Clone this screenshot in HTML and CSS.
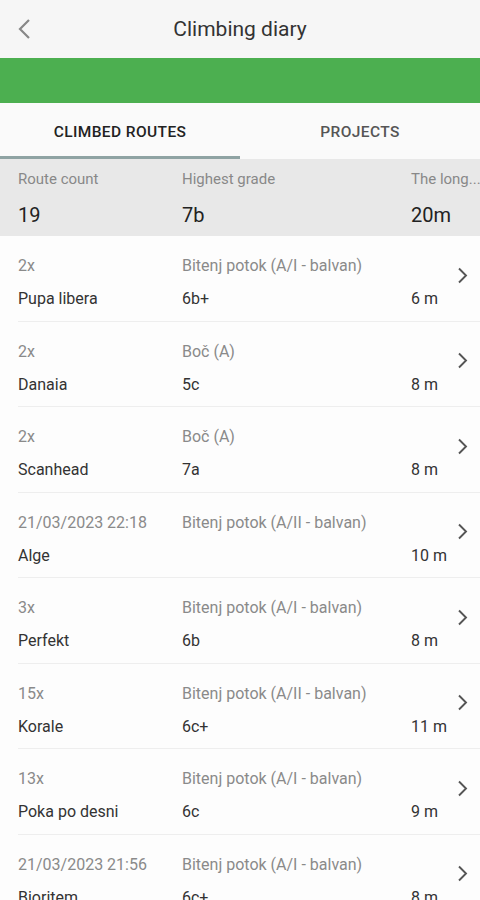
FILE: index.html
```html
<!DOCTYPE html>
<html>
<head>
    <meta charset="UTF-8">
    <title>Climbing diary</title>
    <link rel="stylesheet" href="styles.css">
</head>
<body>
    <div class="top">
        <span class="back">
            <svg width="14" height="22" viewBox="0 0 14 22"><path d="M12 2 L3 11 L12 20" fill="none" stroke="#888" stroke-width="2.2"/></svg>
        </span>
        <div class="title">Climbing diary</div>
    </div>
    <div class="green"></div>
    <div class="tabs">
        <div class="tab active">CLIMBED ROUTES</div>
        <div class="tab">PROJECTS</div>
    </div>
    <div class="stats">
        <div class="stat">
            <div class="lbl">Route count</div>
            <div class="val">19</div>
        </div>
        <div class="stat">
            <div class="lbl">Highest grade</div>
            <div class="val">7b</div>
        </div>
        <div class="stat last">
            <div class="lbl">The long...</div>
            <div class="val">20m</div>
        </div>
    </div>
    <ul class="list">
        <li class="row">
            <div class="cells">
                <span class="c1 sub">2x</span><span class="c2 sub">Bitenj potok (A/I - balvan)</span><span class="c3"></span>
                <span class="c1">Pupa libera</span><span class="c2">6b+</span><span class="c3">6 m</span>
            </div>
            <span class="arr"><svg width="11" height="17" viewBox="0 0 11 17"><path d="M2 1.5 L9 8.5 L2 15.5" fill="none" stroke="#555" stroke-width="1.9"/></svg></span>
        </li>
        <li class="row">
            <div class="cells">
                <span class="c1 sub">2x</span><span class="c2 sub">Boč (A)</span><span class="c3"></span>
                <span class="c1">Danaia</span><span class="c2">5c</span><span class="c3">8 m</span>
            </div>
            <span class="arr"><svg width="11" height="17" viewBox="0 0 11 17"><path d="M2 1.5 L9 8.5 L2 15.5" fill="none" stroke="#555" stroke-width="1.9"/></svg></span>
        </li>
        <li class="row">
            <div class="cells">
                <span class="c1 sub">2x</span><span class="c2 sub">Boč (A)</span><span class="c3"></span>
                <span class="c1">Scanhead</span><span class="c2">7a</span><span class="c3">8 m</span>
            </div>
            <span class="arr"><svg width="11" height="17" viewBox="0 0 11 17"><path d="M2 1.5 L9 8.5 L2 15.5" fill="none" stroke="#555" stroke-width="1.9"/></svg></span>
        </li>
        <li class="row">
            <div class="cells">
                <span class="c1 sub">21/03/2023 22:18</span><span class="c2 sub">Bitenj potok (A/II - balvan)</span><span class="c3"></span>
                <span class="c1">Alge</span><span class="c2"></span><span class="c3">10 m</span>
            </div>
            <span class="arr"><svg width="11" height="17" viewBox="0 0 11 17"><path d="M2 1.5 L9 8.5 L2 15.5" fill="none" stroke="#555" stroke-width="1.9"/></svg></span>
        </li>
        <li class="row">
            <div class="cells">
                <span class="c1 sub">3x</span><span class="c2 sub">Bitenj potok (A/I - balvan)</span><span class="c3"></span>
                <span class="c1">Perfekt</span><span class="c2">6b</span><span class="c3">8 m</span>
            </div>
            <span class="arr"><svg width="11" height="17" viewBox="0 0 11 17"><path d="M2 1.5 L9 8.5 L2 15.5" fill="none" stroke="#555" stroke-width="1.9"/></svg></span>
        </li>
        <li class="row">
            <div class="cells">
                <span class="c1 sub">15x</span><span class="c2 sub">Bitenj potok (A/II - balvan)</span><span class="c3"></span>
                <span class="c1">Korale</span><span class="c2">6c+</span><span class="c3">11 m</span>
            </div>
            <span class="arr"><svg width="11" height="17" viewBox="0 0 11 17"><path d="M2 1.5 L9 8.5 L2 15.5" fill="none" stroke="#555" stroke-width="1.9"/></svg></span>
        </li>
        <li class="row">
            <div class="cells">
                <span class="c1 sub">13x</span><span class="c2 sub">Bitenj potok (A/I - balvan)</span><span class="c3"></span>
                <span class="c1">Poka po desni</span><span class="c2">6c</span><span class="c3">9 m</span>
            </div>
            <span class="arr"><svg width="11" height="17" viewBox="0 0 11 17"><path d="M2 1.5 L9 8.5 L2 15.5" fill="none" stroke="#555" stroke-width="1.9"/></svg></span>
        </li>
        <li class="row">
            <div class="cells">
                <span class="c1 sub">21/03/2023 21:56</span><span class="c2 sub">Bitenj potok (A/I - balvan)</span><span class="c3"></span>
                <span class="c1">Bioritem</span><span class="c2">6c+</span><span class="c3">8 m</span>
            </div>
            <span class="arr"><svg width="11" height="17" viewBox="0 0 11 17"><path d="M2 1.5 L9 8.5 L2 15.5" fill="none" stroke="#555" stroke-width="1.9"/></svg></span>
        </li>
    </ul>
</body>
</html>
```

FILE: styles.css
```css
*{
    margin: 0;
    padding: 0;
    box-sizing: border-box;
}
body{
    font-family: Roboto, "Noto Sans", sans-serif;
    background: #fdfdfd;
    width: 480px;
    height: 900px;
    overflow: hidden;
}
.top{
    height: 58px;
    background: #f6f6f6;
    display: flex;
    align-items: center;
    position: relative;
}
.top .back{
    position: absolute;
    left: 17px;
    top: 18px;
    display: block;
}
.top .title{
    flex: 1;
    text-align: center;
    font-size: 21px;
    color: #333;
}
.green{
    height: 45px;
    background: #4caf50;
}
.tabs{
    height: 56px;
    display: flex;
    background: #fafafa;
}
.tab{
    flex: 1;
    display: flex;
    align-items: center;
    justify-content: center;
    font-size: 15.5px;
    font-weight: 500;
    letter-spacing: 0.4px;
    color: #555;
    border-bottom: 3px solid transparent;
    padding-top: 5px;
}
.tab.active{
    color: #222;
    border-bottom-color: #8fa3a3;
}
.stats{
    height: 77px;
    background: #e8e8e8;
    display: grid;
    grid-template-columns: 164px 229px 1fr;
    padding-left: 18px;
    padding-top: 10px;
}
.stat{
    min-width: 0;
}
.stat .lbl{
    font-size: 15px;
    color: #888;
    line-height: 20px;
    white-space: nowrap;
}
.stat .val{
    font-size: 20px;
    color: #222;
    line-height: 24px;
    margin-top: 14px;
}
.list{
    list-style: none;
}
.row{
    height: 85.5px;
    margin-left: 18px;
    border-bottom: 1px solid #eeeeee;
    display: flex;
    align-items: center;
}
.cells{
    flex: 1;
    display: grid;
    grid-template-columns: 164px 229px 1fr;
    row-gap: 13px;
    padding-top: 9px;
}
.cells span{
    font-size: 16px;
    line-height: 20px;
    color: #333;
    white-space: nowrap;
}
.cells .sub{
    color: #8a8a8a;
}
.arr{
    width: 23px;
    display: flex;
    margin-top: -6px;
}
```
